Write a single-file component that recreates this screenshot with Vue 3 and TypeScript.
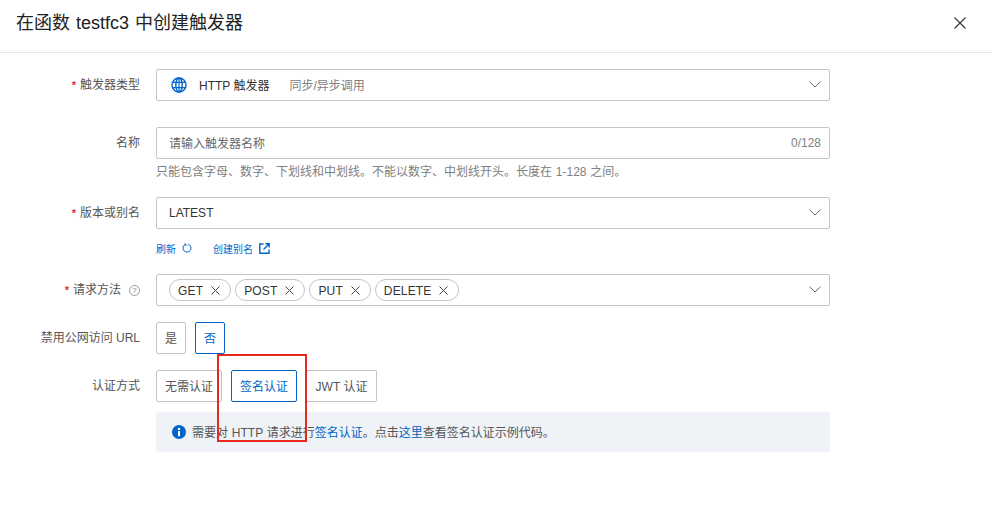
<script setup lang="ts">
const methods: string[] = ['GET', 'POST', 'PUT', 'DELETE']
</script>

<template>
  <div class="dialog">
    <header class="head">
      <h1 class="title">在函数 testfc3 中创建触发器</h1>
      <svg class="close" width="14" height="14" viewBox="0 0 14 14"><path d="M1.5 1.5l11 11M12.5 1.5l-11 11" stroke="#333" stroke-width="1.1" fill="none" /></svg>
    </header>
    <main class="form">
      <div class="row r-type">
        <label class="label"><i class="req">*</i>触发器类型</label>
        <div class="control">
          <div class="box select">
            <svg class="globe" width="16" height="16" viewBox="0 0 16 16" fill="none" stroke="#0064c8" stroke-width="1.4">
              <circle cx="8" cy="8" r="7" />
              <ellipse cx="8" cy="8" rx="3.2" ry="7" />
              <path d="M1.5 5.4h13M1.5 10.6h13M8 1v14" stroke-width="1.2" />
            </svg>
            <span class="type-name">HTTP 触发器</span>
            <span class="type-desc">同步/异步调用</span>
            <svg class="chev" width="12" height="7" viewBox="0 0 12 7"><path d="M.5.7L6 6l5.500-5.300" stroke="#666" fill="none" /></svg>
          </div>
        </div>
      </div>

      <div class="row r-name">
        <label class="label">名称</label>
        <div class="control">
          <div class="box input">
            <span class="placeholder">请输入触发器名称</span>
            <span class="count">0/128</span>
          </div>
          <p class="help">只能包含字母、数字、下划线和中划线。不能以数字、中划线开头。长度在 1-128 之间。</p>
        </div>
      </div>

      <div class="row r-version">
        <label class="label"><i class="req">*</i>版本或别名</label>
        <div class="control">
          <div class="box select">
            <span class="value">LATEST</span>
            <svg class="chev" width="12" height="7" viewBox="0 0 12 7"><path d="M.5.7L6 6l5.500-5.300" stroke="#666" fill="none" /></svg>
          </div>
          <div class="links">
            <a class="link first">刷新
              <svg width="10" height="10" viewBox="0 0 10 10" fill="none" stroke="#0064c8"><path d="M6.300 1.300a4 4 0 1 1-2.900.1" /><path d="M3.200 0v2.300h2.100" stroke-width=".8" /></svg>
            </a>
            <a class="link second">创建别名
              <svg width="11" height="11" viewBox="0 0 11 11" fill="none" stroke="#0064c8" stroke-width="1.4"><path d="M4.500 1H.8v9.200H10V6.500" /><path d="M4.500 6.500L10 1M6.500.8h3.700v3.700" /></svg>
            </a>
          </div>
        </div>
      </div>

      <div class="row r-method">
        <label class="label"><i class="req">*</i>请求方法<span class="q">?</span></label>
        <div class="control">
          <div class="box tags">
            <span v-for="m in methods" :key="m" class="tag">{{ m }}
              <svg width="9" height="9" viewBox="0 0 9 9"><path d="M.5.500l8 8M8.500.500l-8 8" stroke="#444" fill="none" /></svg>
            </span>
            <svg class="chev" width="12" height="7" viewBox="0 0 12 7"><path d="M.5.7L6 6l5.500-5.300" stroke="#666" fill="none" /></svg>
          </div>
        </div>
      </div>

      <div class="row r-public">
        <label class="label">禁用公网访问 URL</label>
        <div class="control seg">
          <button class="opt yes">是</button>
          <button class="opt no on">否</button>
        </div>
      </div>

      <div class="row r-auth">
        <label class="label">认证方式</label>
        <div class="control">
          <div class="seg">
            <button class="opt a1">无需认证</button>
            <button class="opt a2 on">签名认证</button>
            <button class="opt a3">JWT 认证</button>
          </div>
          <div class="notice">
            <svg width="14" height="14" viewBox="0 0 14 14"><circle cx="7" cy="7" r="7" fill="#0064c8" /><rect x="6" y="6" width="2" height="5.200" fill="#fff" /><rect x="6" y="3" width="2" height="2" fill="#fff" /></svg>
            <span>需要对 HTTP 请求进行<a>签名认证</a>。点击<a>这里</a>查看签名认证示例代码。</span>
          </div>
        </div>
      </div>
    </main>
    <div class="mark"></div>
  </div>
</template>

<style scoped>
.dialog {
  position: relative;
  width: 992px;
  height: 520px;
  overflow: hidden;
  background: #fff;
  color: #333;
  font-family: "Liberation Sans", "Noto Sans CJK SC", sans-serif;
  font-size: 12px;
}
.head {
  box-sizing: border-box;
  height: 53px;
  padding: 0 25px 7px 16px;
  border-bottom: 1px solid #e5e5e5;
  display: flex;
  align-items: center;
  justify-content: space-between;
}
.title {
  margin: 0;
  font-size: 18px;
  font-weight: 400;
  line-height: 28px;
  color: #222;
  word-spacing: 1px;
}
.close { display: block; margin-top: 1px; }
.form { padding-top: 16px; }
.row { display: flex; align-items: flex-start; }
.label {
  box-sizing: border-box;
  width: 156px;
  padding-right: 16px;
  height: 32px;
  display: flex;
  align-items: center;
  justify-content: flex-end;
  color: #555;
  line-height: 32px;
}
.req {
  color: #d93026;
  font-style: normal;
  font-weight: 700;
  font-size: 11px;
  margin-right: 4px;
}
.q {
  box-sizing: border-box;
  width: 11px;
  height: 11px;
  border: 1px solid #999;
  border-radius: 50%;
  margin-left: 8px;
  font-size: 8px;
  line-height: 9px;
  text-align: center;
  color: #888;
}
.control { width: 674px; }
.box {
  box-sizing: border-box;
  height: 32px;
  border: 1px solid #c0c6cc;
  border-radius: 2px;
  display: flex;
  align-items: center;
  padding: 0 8px 2px 12px;
  background: #fff;
}
.chev { margin-left: auto; flex: none; }
.globe { margin: 2px 12px 0 2px; flex: none; }
.type-name { color: #333; }
.type-desc { color: #808080; margin-left: 20px; }
.value { color: #333; margin-top: 2px; }
.input { justify-content: space-between; }
.placeholder { color: #666; }
.count { color: #808080; margin-top: 2px; }
.help {
  margin: 0;
  height: 26px;
  line-height: 26px;
  color: #808080;
  word-spacing: .5px;
}
.links {
  height: 32px;
  display: flex;
  align-items: center;
  gap: 21px;
  font-size: 10px;
  color: #0064c8;
  margin-top: 3px;
}
.link { display: inline-flex; align-items: center; }
.first { gap: 6px; }
.second { gap: 6px; }
.tags { gap: 4px; padding: 0 8px 0 12px; }
.tags .chev { margin-bottom: 2px; }
.tag {
  box-sizing: border-box;
  height: 22px;
  display: inline-flex;
  align-items: center;
  gap: 8px;
  padding: 1px 10px 0 8px;
  border: 1px solid #c0c6cc;
  border-radius: 11px;
  color: #333;
  letter-spacing: .15px;
}
.seg { display: flex; }
.opt {
  box-sizing: border-box;
  height: 32px;
  padding: 0 0 2px;
  border: 1px solid #c0c6cc;
  border-radius: 2px;
  background: #fff;
  color: #555;
  font: inherit;
}
.opt.on { border-color: #0064c8; color: #0064c8; }
.yes { width: 30px; }
.no { width: 30px; margin-left: 9px; }
.a1 { width: 66px; }
.a2 { width: 66px; margin-left: 9px; }
.a3 { width: 71px; margin-left: 9px; }
.notice {
  box-sizing: border-box;
  height: 40px;
  margin-top: 10px;
  background: #eff3f8;
  border-radius: 2px;
  padding: 0 16px 1px;
  display: flex;
  align-items: center;
  gap: 6px;
  color: #555;
  word-spacing: .5px;
}
.notice a { color: #0064c8; }
.r-type { height: 58px; }
.r-name { height: 70px; }
.r-version { height: 77px; }
.r-method { height: 48px; }
.r-public { height: 48px; }
.mark {
  position: absolute;
  left: 217px;
  top: 354px;
  width: 90px;
  height: 88px;
  box-sizing: border-box;
  border: 2px solid #e8281e;
}
</style>
